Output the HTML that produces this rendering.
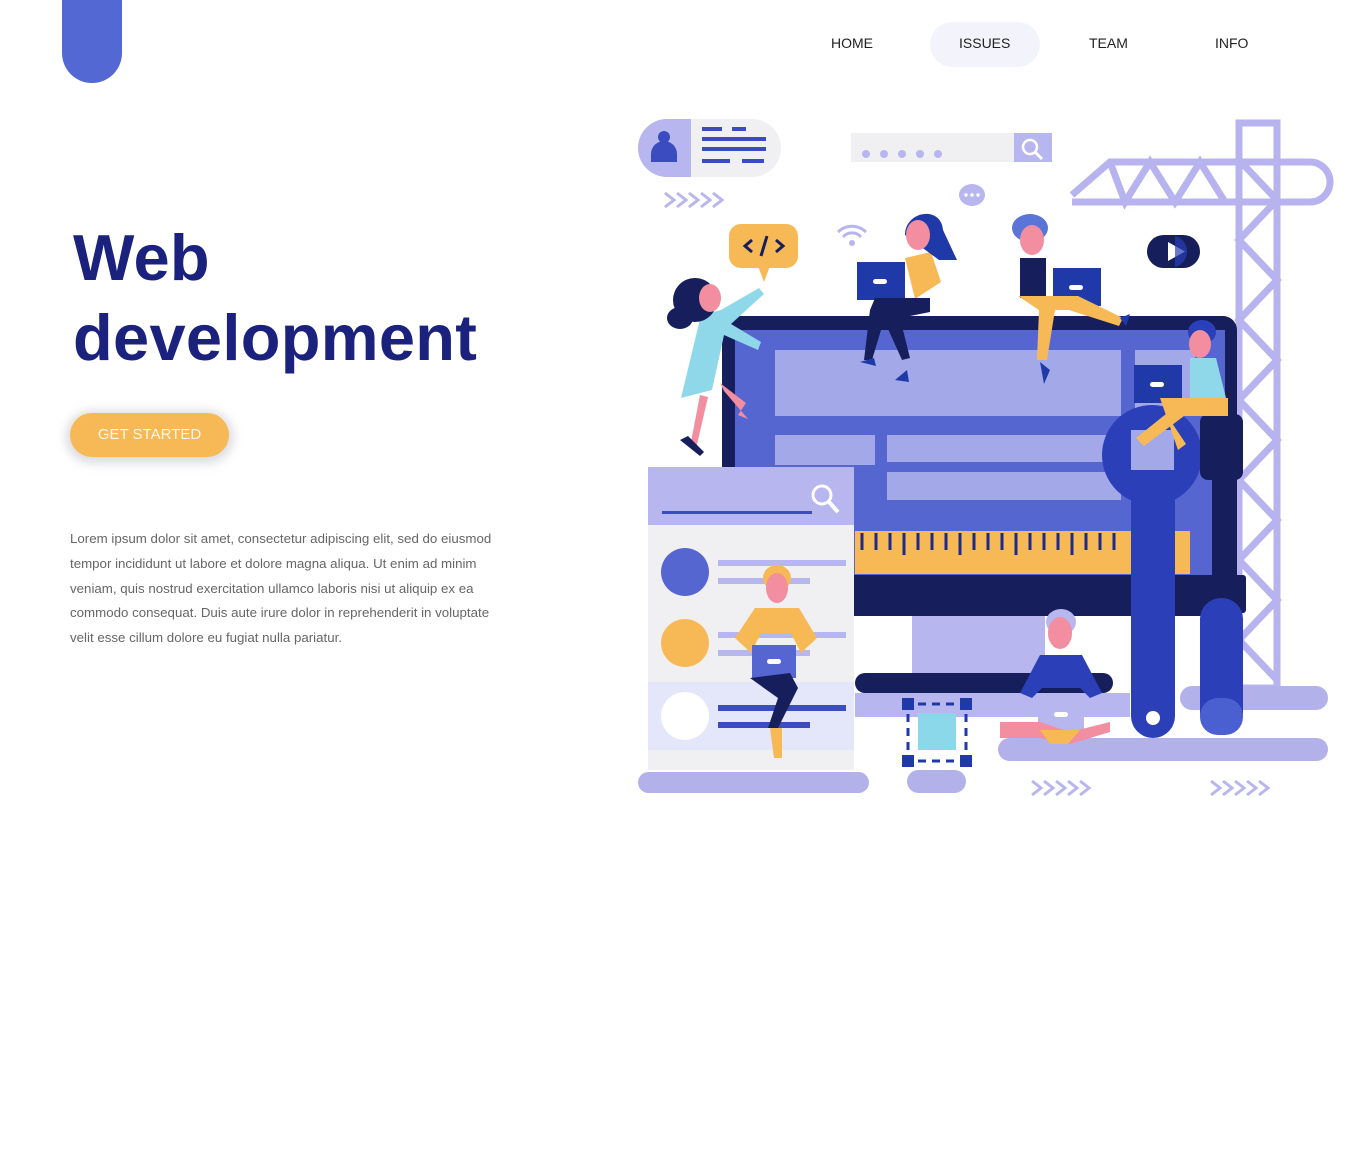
<!DOCTYPE html>
<html><head><meta charset="utf-8"><style>
*{margin:0;padding:0;box-sizing:border-box}
body{width:1366px;height:1162px;background:#fff;position:relative;overflow:hidden;font-family:"Liberation Sans",Arial,sans-serif}
.logo{position:absolute;left:62px;top:0;width:60px;height:83px;background:#5468d4;border-radius:0 0 30px 30px}
.nav{position:absolute;top:35px;font-size:14px;color:#222}
.pill{position:absolute;left:930px;top:22px;width:110px;height:45px;border-radius:23px;background:#f3f3fb}
h1{position:absolute;left:73px;top:218px;font-size:65px;line-height:80px;font-weight:bold;color:#1b227e;letter-spacing:0.3px}
.btn{position:absolute;left:70px;top:413px;width:159px;height:44px;border-radius:22px;background:#f7b955;color:#fff8ea;font-size:15px;text-align:center;line-height:44px;box-shadow:0 2px 10px 4px rgba(150,150,170,.35)}
p{position:absolute;left:70px;top:527px;font-size:13.3px;line-height:24.8px;color:#666}
svg{position:absolute;left:630px;top:100px}
</style></head><body>
<div class="logo"></div>
<div class="pill"></div>
<div class="nav" style="left:831px">HOME</div>
<div class="nav" style="left:959px">ISSUES</div>
<div class="nav" style="left:1089px">TEAM</div>
<div class="nav" style="left:1215px">INFO</div>
<h1>Web<br>development</h1>
<div class="btn">GET STARTED</div>
<p>Lorem ipsum dolor sit amet, consectetur adipiscing elit, sed do eiusmod<br>tempor incididunt ut labore et dolore magna aliqua. Ut enim ad minim<br>veniam, quis nostrud exercitation ullamco laboris nisi ut aliquip ex ea<br>commodo consequat. Duis aute irure dolor in reprehenderit in voluptate<br>velit esse cillum dolore eu fugiat nulla pariatur.</p>
<svg width="720" height="720" viewBox="630 100 720 720">
<g fill="none" stroke="#b6b3ef" stroke-width="7">
<rect x="1239" y="123" width="38" height="565"/>
<path d="M1239 160 L1277 200 M1277 200 L1239 240 L1277 280 L1239 320 L1277 360 L1239 400 L1277 440 L1239 480 L1277 520 L1239 560 L1277 600 L1239 640 L1277 680"/>
<path d="M1072 202 L1310 202 A20 20 0 0 0 1310 162 L1110 162 L1072 195"/>
<path d="M1110 162 L1125 202 L1150 162 L1175 202 L1200 162 L1225 202"/>
</g>
<rect x="1180" y="686" width="148" height="24" rx="12" fill="#b3b1ea"/>
<rect x="998" y="738" width="330" height="23" rx="11.5" fill="#b3b1ea"/>
<rect x="722" y="316" width="515" height="300" rx="14" fill="#161f5c"/>
<rect x="735" y="330" width="490" height="245" fill="#5566d0"/>
<rect x="775" y="350" width="346" height="66" fill="#a3a9e8"/>
<rect x="775" y="435" width="100" height="30" fill="#a3a9e8"/>
<rect x="887" y="435" width="234" height="27" fill="#a3a9e8"/>
<rect x="887" y="472" width="234" height="28" fill="#a3a9e8"/>
<rect x="1135" y="350" width="60" height="65" fill="#a3a9e8"/>
<rect x="855" y="531" width="335" height="43" fill="#f7b955"/>
<g stroke="#1c2a8a" stroke-width="3">
<path d="M862 533v17M876 533v17M890 533v17M904 533v22M918 533v17M932 533v17M946 533v17M960 533v22M974 533v17M988 533v17M1002 533v17M1016 533v22M1030 533v17M1044 533v17M1058 533v17M1072 533v22M1086 533v17M1100 533v17M1114 533v17"/>
</g>
<rect x="1090" y="575" width="156" height="38" rx="3" fill="#161f5c"/>
<rect x="912" y="616" width="133" height="58" fill="#b8b6ee"/>
<rect x="855" y="673" width="258" height="20" rx="10" fill="#161f5c"/>
<rect x="855" y="693" width="275" height="24" fill="#b8b6ee"/>
<rect x="918" y="713" width="38" height="37" fill="#8bd8ea"/>
<g fill="#1f3aa8"><rect x="902" y="698" width="12" height="12"/><rect x="960" y="698" width="12" height="12"/><rect x="902" y="755" width="12" height="12"/><rect x="960" y="755" width="12" height="12"/></g>
<g stroke="#1f3aa8" stroke-width="3" stroke-dasharray="8 6"><path d="M918 704h40M918 761h40M908 714v38M966 714v38"/></g>
<rect x="907" y="770" width="59" height="23" rx="11.5" fill="#b3b1ea"/>
<circle cx="1152" cy="455" r="50" fill="#2a3fb8"/>
<rect x="1131" y="430" width="43" height="40" fill="#a3a9e8"/>
<rect x="1131" y="480" width="44" height="258" rx="22" fill="#2a3fb8"/>
<circle cx="1153" cy="718" r="7" fill="#fff"/>
<rect x="1200" y="414" width="43" height="66" rx="8" fill="#161f5c"/>
<rect x="1212" y="470" width="23" height="110" fill="#161f5c"/>
<rect x="1200" y="598" width="43" height="137" rx="21" fill="#2a3fb8"/>
<rect x="1200" y="698" width="43" height="37" rx="18" fill="#4a5fd0"/>
<rect x="648" y="467" width="206" height="303" fill="#f0f0f3"/>
<rect x="648" y="467" width="206" height="58" fill="#b8b6ee"/>
<rect x="662" y="511" width="150" height="3" fill="#3a4cc0"/>
<circle cx="822" cy="495" r="9" fill="none" stroke="#fff" stroke-width="3"/><path d="M829 502l9 10" stroke="#fff" stroke-width="4"/>
<rect x="648" y="682" width="206" height="68" fill="#e4e6fa"/>
<circle cx="685" cy="572" r="24" fill="#5566d0"/>
<circle cx="685" cy="643" r="24" fill="#f7b955"/>
<circle cx="685" cy="716" r="24" fill="#fff"/>
<g fill="#b8b6ee"><rect x="718" y="560" width="128" height="6"/><rect x="718" y="578" width="92" height="6"/><rect x="718" y="632" width="128" height="6"/><rect x="718" y="650" width="92" height="6"/></g>
<g fill="#3a4cc0"><rect x="718" y="705" width="128" height="6"/><rect x="718" y="722" width="92" height="6"/></g>
<rect x="638" y="772" width="231" height="21" rx="10.5" fill="#b3b1ea"/>
<rect x="638" y="119" width="143" height="58" rx="29" fill="#f0f0f3"/>
<path d="M667 119h24v58h-24a29 29 0 0 1 0-58z" fill="#b8b6ee"/>
<circle cx="664" cy="137" r="6" fill="#3a4cc0"/><path d="M651 162v-8a10 10 0 0 1 26 0v8z" fill="#3a4cc0"/>
<g fill="#3a4cc0"><rect x="702" y="127" width="20" height="4"/><rect x="732" y="127" width="14" height="4"/><rect x="702" y="137" width="64" height="4"/><rect x="702" y="147" width="64" height="4"/><rect x="702" y="159" width="28" height="4"/><rect x="742" y="159" width="22" height="4"/></g>
<rect x="851" y="133" width="163" height="29" fill="#f0f0f3"/>
<rect x="1014" y="133" width="38" height="29" fill="#b8b6ee"/>
<circle cx="1030" cy="147" r="7" fill="none" stroke="#fff" stroke-width="2.5"/><path d="M1035 152l7 7" stroke="#fff" stroke-width="3"/>
<g fill="#b8b6ee"><circle cx="866" cy="154" r="4"/><circle cx="884" cy="154" r="4"/><circle cx="902" cy="154" r="4"/><circle cx="920" cy="154" r="4"/><circle cx="938" cy="154" r="4"/></g>
<g fill="none" stroke="#b8b6ee" stroke-width="3"><path d="M665 193l9 7-9 7M677 193l9 7-9 7M689 193l9 7-9 7M701 193l9 7-9 7M713 193l9 7-9 7"/>
<path d="M1032 781l9 7-9 7M1044 781l9 7-9 7M1056 781l9 7-9 7M1068 781l9 7-9 7M1080 781l9 7-9 7"/>
<path d="M1211 781l9 7-9 7M1223 781l9 7-9 7M1235 781l9 7-9 7M1247 781l9 7-9 7M1259 781l9 7-9 7"/>
<path d="M838 232a20 20 0 0 1 28 0M843 237a12 12 0 0 1 18 0"/></g>
<circle cx="852" cy="243" r="3" fill="#b8b6ee"/>
<ellipse cx="972" cy="195" rx="13" ry="11" fill="#b8b6ee"/><g fill="#fff"><circle cx="966" cy="195" r="1.7"/><circle cx="972" cy="195" r="1.7"/><circle cx="978" cy="195" r="1.7"/></g>
<rect x="1147" y="235" width="53" height="33" rx="16.5" fill="#161f5c"/><path d="M1168 242v19l17-9.5z" fill="#fff"/><path d="M1175 236a16 16 0 0 1 0 31" fill="#2a3fb8" opacity=".7"/>
<rect x="729" y="224" width="69" height="44" rx="12" fill="#f7b955"/><path d="M758 266l6 16 6-16z" fill="#f7b955"/>
<path d="M752 240l-7 6 7 6M776 240l7 6-7 6M767 236l-6 20" stroke="#161f5c" stroke-width="3" fill="none"/>
<path d="M701 315l20 -5 38 -22 5 6 -33 30 30 18 -3 8 -34 -15 -12 55 -31 8z" fill="#8ed8ea"/>
<path d="M700 395l-10 52 6 2 12 -52zM720 383l26 20 -8 12 10 4 -24 -28z" fill="#f28ea0"/>
<ellipse cx="695" cy="300" rx="22" ry="22" fill="#161f5c"/><ellipse cx="680" cy="318" rx="13" ry="11" fill="#161f5c"/>
<ellipse cx="710" cy="298" rx="11" ry="14" fill="#f28ea0"/>
<path d="M680 440l20 16 4-4-16-16z" fill="#161f5c"/>
<rect x="857" y="262" width="48" height="38" fill="#1f3aa8"/><rect x="873" y="279" width="14" height="5" rx="2.5" fill="#fff"/>
<path d="M905 258l26 -6 10 30 -26 17z" fill="#f7b955"/>
<path d="M905 235c0-24 36-30 38 -5l14 30-18 0z" fill="#1f3aa8"/>
<ellipse cx="918" cy="235" rx="12" ry="15" fill="#f28ea0"/>
<path d="M875 298l55 0 0 14 -30 6 10 40 -8 2 -18 -40 -12 40 -8 0 6 -50z" fill="#161f5c"/>
<path d="M860 362l14 -4 2 8zM895 380l12 -10 2 12z" fill="#1f3aa8"/>
<ellipse cx="1030" cy="228" rx="18" ry="14" fill="#5a74d8"/><ellipse cx="1032" cy="240" rx="12" ry="15" fill="#f28ea0"/>
<path d="M1020 258h26v40h-26z" fill="#161f5c"/>
<rect x="1053" y="268" width="48" height="38" fill="#1f3aa8"/><rect x="1069" y="285" width="14" height="5" rx="2.5" fill="#fff"/>
<path d="M1018 296h60l45 22 -4 8 -50 -16 -14 0 -8 50 -10 0 2 -50z" fill="#f7b955"/>
<path d="M1040 362l10 8 -6 14zM1120 318l10 -4 -4 12z" fill="#1f3aa8"/>
<ellipse cx="1202" cy="332" rx="14" ry="12" fill="#2a3fb8"/><ellipse cx="1200" cy="344" rx="11" ry="14" fill="#f28ea0"/>
<path d="M1190 358h26l10 40h-36z" fill="#8ed8ea"/>
<rect x="1134" y="365" width="48" height="38" fill="#1f3aa8"/><rect x="1150" y="382" width="14" height="5" rx="2.5" fill="#fff"/>
<path d="M1160 398h68v18h-44l-40 30-8-8 30-24 20 30-8 6z" fill="#f7b955"/>
<ellipse cx="777" cy="578" rx="14" ry="13" fill="#f7b955"/><ellipse cx="777" cy="588" rx="11" ry="15" fill="#f28ea0"/>
<path d="M755 608h44l18 30-16 15-10-20h-30l-10 20-16-15z" fill="#f7b955"/>
<rect x="752" y="645" width="44" height="33" fill="#5566d0"/><rect x="767" y="659" width="14" height="5" rx="2.5" fill="#fff"/>
<path d="M750 678l40-5 8 15-20 40-10 0 10-30z" fill="#161f5c"/>
<path d="M770 728l12 0 0 30-8 0z" fill="#f7b955"/>
<ellipse cx="1061" cy="622" rx="15" ry="13" fill="#b8b6ee"/><ellipse cx="1060" cy="633" rx="12" ry="16" fill="#f28ea0"/>
<path d="M1040 655h42l20 38-12 5-10-10h-38l-10 10-12-5z" fill="#2a3fb8"/>
<rect x="1038" y="695" width="46" height="38" fill="#b8b6ee"/><rect x="1054" y="712" width="14" height="5" rx="2.5" fill="#fff"/>
<path d="M1000 722l40 0 30 10 40 -10 0 10 -40 12 -30 -6 -40 0z" fill="#f28ea0"/>
<path d="M1040 730h40l-12 14h-18z" fill="#f7b955"/>
</svg>
</body></html>
